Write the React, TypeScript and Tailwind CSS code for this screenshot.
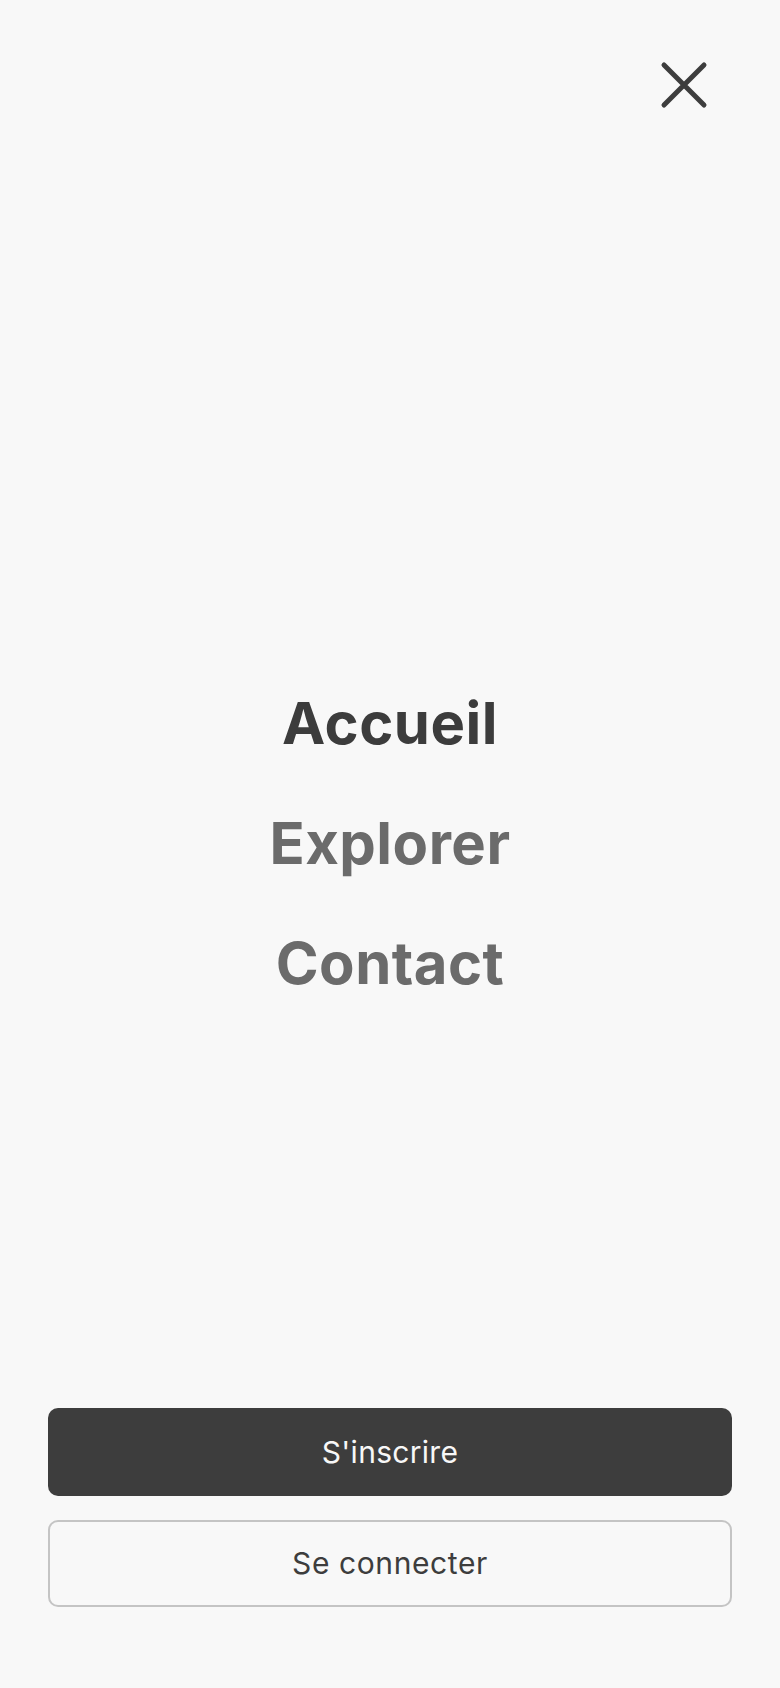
export default function App() {
  const links = [
    { label: "Accueil", active: true },
    { label: "Explorer", active: false },
    { label: "Contact", active: false },
  ];

  return (
    <div
      className="flex h-screen min-h-[1688px] flex-col bg-[#f8f8f8]"
      style={{ fontFamily: "Inter, 'Noto Sans', sans-serif" }}
    >
      {/* Header */}
      <div className="flex justify-end pr-[72px] pt-[61px]">
        <button aria-label="Fermer" className="h-12 w-12">
          <svg viewBox="0 0 48 48" className="h-12 w-12" fill="none" stroke="#3d3d3d" strokeWidth="5" strokeLinecap="round">
            <path d="M4 4L44 44M44 4L4 44" />
          </svg>
        </button>
      </div>

      {/* Nav */}
      <nav className="mt-[554px] flex flex-col items-center">
        {links.map((l) => (
          <a
            key={l.label}
            href="#"
            className={`text-[58px] font-bold leading-[120px] tracking-[0.5px] ${
              l.active ? "text-[#3c3c3c]" : "text-[#6b6b6b]"
            }`}
          >
            {l.label}
          </a>
        ))}
      </nav>

      {/* Actions */}
      <div className="mt-auto flex flex-col gap-6 px-12 pb-[81px]">
        <button className="h-[88px] w-full rounded-[10px] bg-[#3d3d3d] text-[30px] tracking-[0.3px] text-[#f7f7f7]">
          S'inscrire
        </button>
        <button className="h-[87px] w-full rounded-[10px] border-2 border-[#c4c4c4] text-[30px] tracking-[0.6px] text-[#3d3d3d]">
          Se connecter
        </button>
      </div>
    </div>
  );
}
